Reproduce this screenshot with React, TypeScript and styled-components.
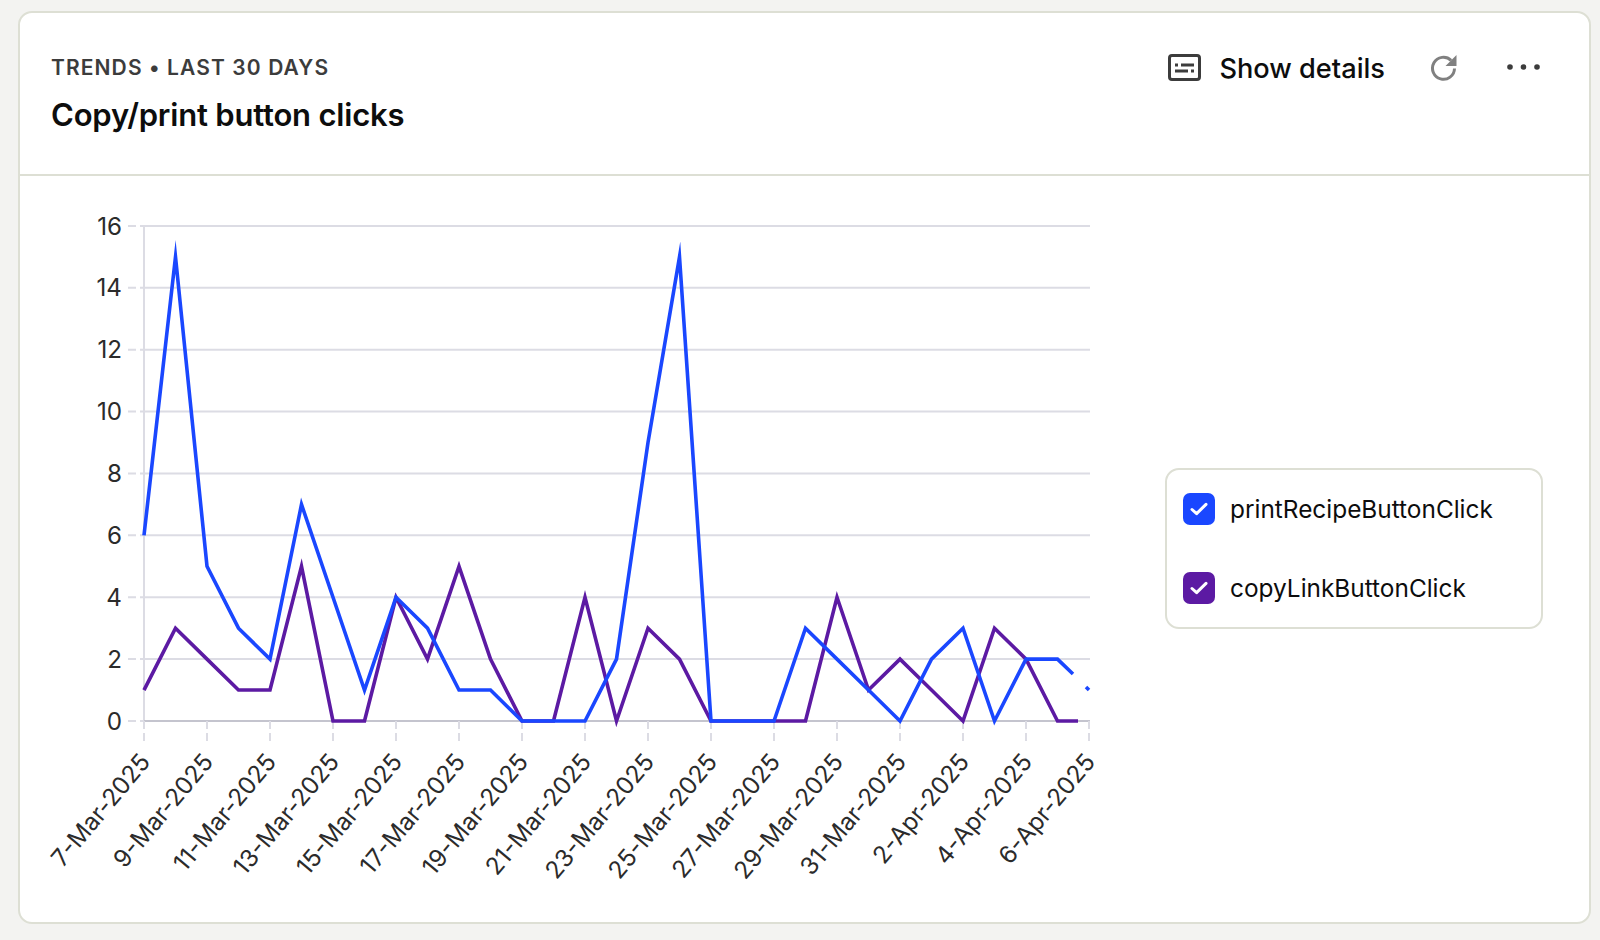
import styled, { createGlobalStyle } from 'styled-components';

const GlobalStyle = createGlobalStyle`
  html, body {
    margin: 0;
    padding: 0;
    background: #f3f3f1;
    font-family: Inter, "Liberation Sans", sans-serif;
  }
`;

const Page = styled.div`
  width: 1600px;
  height: 940px;
  box-sizing: border-box;
  padding: 11px 9px 16px 18px;
`;

const Card = styled.section`
  height: 100%;
  box-sizing: border-box;
  display: flex;
  flex-direction: column;
  background: #fff;
  border: 2px solid #dddfd4;
  border-radius: 14px;
  overflow: hidden;
`;

const Header = styled.header`
  height: 163px;
  flex: none;
  box-sizing: border-box;
  display: flex;
  justify-content: space-between;
  align-items: flex-start;
  padding: 40px 49px 0 31px;
  border-bottom: 2px solid #dddfd4;
`;

const Headings = styled.div`
  margin-top: 1px;
`;

const Eyebrow = styled.div`
  font-family: Inter, sans-serif;
  font-size: 21px;
  line-height: 28px;
  font-weight: 600;
  letter-spacing: 1.1px;
  color: #3c3c3c;
`;

const Title = styled.h2`
  margin: 13px 0 0;
  font-family: Inter, sans-serif;
  font-size: 31px;
  line-height: 40px;
  font-weight: 600;
  letter-spacing: -0.2px;
  color: #0d0d0d;
`;

const Actions = styled.div`
  display: flex;
  align-items: center;
  height: 28px;
`;

const ActionButton = styled.button`
  display: flex;
  align-items: center;
  gap: 18px;
  padding: 0;
  border: 0;
  background: none;
  font-family: Inter, sans-serif;
  font-size: 27.2px;
  font-weight: 450;
  color: #0d0d0d;
  margin-left: ${(p: { $gap: number }) => p.$gap}px;
`;

const ActionLabel = styled.span`
  padding-top: 2px;
`;

const Body = styled.div`
  flex: 1;
  display: flex;
  align-items: center;
  justify-content: space-between;
  padding-right: 46px;
`;

const Chart = styled.svg`
  display: block;
  width: 1120px;
  height: 746px;
  flex: none;
`;

const GridLine = styled.line`
  stroke: #dcdce4;
  stroke-width: 2;
`;

const AxisLine = styled.line`
  stroke: #c4c4ce;
  stroke-width: 2;
`;

const Tick = styled.line`
  stroke: #dcdce4;
  stroke-width: 2;
  stroke-dasharray: 8 4;
`;

const AxisText = styled.text`
  font-family: Inter, sans-serif;
  font-size: 24.2px;
  fill: #2b2b2b;
`;

const Series = styled.polyline<{ $color: string }>`
  fill: none;
  stroke: ${(p) => p.$color};
  stroke-width: 3.6;
  stroke-linejoin: miter;
  stroke-miterlimit: 12;
`;

const Legend = styled.div`
  width: 378px;
  height: 161px;
  box-sizing: border-box;
  display: flex;
  flex-direction: column;
  justify-content: center;
  gap: 47px;
  margin-bottom: 1px;
  padding-left: 16px;
  border: 2px solid #dddfd4;
  border-radius: 14px;
`;

const LegendRow = styled.label`
  display: flex;
  align-items: center;
  gap: 15px;
  font-size: 24.4px;
  line-height: 32px;
  color: #0d0d0d;
`;

const CheckBox = styled.span<{ $color: string }>`
  width: 32px;
  height: 32px;
  flex: none;
  display: flex;
  align-items: center;
  justify-content: center;
  border-radius: 7px;
  background: ${(p) => p.$color};
`;

const BLUE = '#1a47ff';
const PURPLE = '#5c1aa3';

const blue = [6, 15, 5, 3, 2, 7, 4, 1, 4, 3, 1, 1, 0, 0, 0, 2, 9, 15, 0, 0, 0, 3, 2, 1, 0, 2, 3, 0, 2, 2];
const purple = [1, 3, 2, 1, 1, 5, 0, 0, 4, 2, 5, 2, 0, 0, 4, 0, 3, 2, 0, 0, 0, 0, 4, 1, 2, 1, 0, 3, 2, 0];

const xOf = (i: number) => 144 + i * 31.5;
const yOf = (v: number) => 721 - v * 30.94;
const points = (data: number[]) => data.map((v, i) => `${xOf(i)},${yOf(v)}`).join(' ');

const dates = [
  '7-Mar-2025', '9-Mar-2025', '11-Mar-2025', '13-Mar-2025', '15-Mar-2025', '17-Mar-2025',
  '19-Mar-2025', '21-Mar-2025', '23-Mar-2025', '25-Mar-2025', '27-Mar-2025', '29-Mar-2025',
  '31-Mar-2025', '2-Apr-2025', '4-Apr-2025', '6-Apr-2025',
];

const Check = () => (
  <svg width="18" height="14" viewBox="0 0 18 14" fill="none">
    <path d="M2 7.5 L6.6 11.6 L16 2.4" stroke="#fff" strokeWidth="3" strokeLinecap="round" strokeLinejoin="round" />
  </svg>
);

export default function App() {
  return (
    <>
      <GlobalStyle />
      <Page>
        <Card>
          <Header>
            <Headings>
              <Eyebrow>TRENDS • LAST 30 DAYS</Eyebrow>
              <Title>Copy/print button clicks</Title>
            </Headings>
            <Actions>
              <ActionButton $gap={0}>
                <svg width="33" height="27" viewBox="0 0 33 27" fill="none">
                  <rect x="1.5" y="1.5" width="30" height="24" rx="2.5" stroke="#3c3c3c" strokeWidth="3" />
                  <path d="M7 11h3M13 11h13M7 17h13M23 17h3" stroke="#3c3c3c" strokeWidth="3" />
                </svg>
                <ActionLabel>Show details</ActionLabel>
              </ActionButton>
              <ActionButton $gap={45}>
                <svg width="28" height="27" viewBox="0 0 28 27" fill="none">
                  <path d="M24.5 14.5a11 11 0 1 1-3.4-8.2" stroke="#808080" strokeWidth="3" />
                  <path d="M26.5 1v11h-11z" fill="#808080" />
                </svg>
              </ActionButton>
              <ActionButton $gap={49}>
                <svg width="33" height="8" viewBox="0 0 33 8" fill="#3c3c3c">
                  <circle cx="3" cy="4" r="2.8" />
                  <circle cx="16.5" cy="4" r="2.8" />
                  <circle cx="30" cy="4" r="2.8" />
                </svg>
              </ActionButton>
            </Actions>
          </Header>
          <Body>
            <Chart viewBox="20 176 1120 746">
              {[16, 14, 12, 10, 8, 6, 4, 2].map((v) => (
                <GridLine key={v} x1={144} x2={1090} y1={yOf(v)} y2={yOf(v)} />
              ))}
              <GridLine x1={144} x2={144} y1={226} y2={721} />
              <AxisLine x1={144} x2={1090} y1={721} y2={721} />
              {[16, 14, 12, 10, 8, 6, 4, 2, 0].map((v) => (
                <g key={v}>
                  <Tick x1={128} x2={144} y1={yOf(v)} y2={yOf(v)} />
                  <AxisText x={122} y={yOf(v) + 8.6} textAnchor="end">{v}</AxisText>
                </g>
              ))}
              {dates.map((d, i) => (
                <g key={d}>
                  <Tick x1={xOf(i * 2)} x2={xOf(i * 2)} y1={721} y2={742} />
                  <AxisText
                    textAnchor="end"
                    transform={`translate(${xOf(i * 2) + 7.5} ${762.5}) rotate(-50)`}
                  >
                    {d}
                  </AxisText>
                </g>
              ))}
              <Series $color={PURPLE} points={`${points(purple)} 1078,721`} />
              <Series $color={BLUE} points={`${points(blue)} 1073,674`} />
              <Series $color={BLUE} points="1086,687 1089,690" />
            </Chart>
            <Legend>
              <LegendRow>
                <CheckBox $color={BLUE}><Check /></CheckBox>
                printRecipeButtonClick
              </LegendRow>
              <LegendRow>
                <CheckBox $color={PURPLE}><Check /></CheckBox>
                copyLinkButtonClick
              </LegendRow>
            </Legend>
          </Body>
        </Card>
      </Page>
    </>
  );
}
